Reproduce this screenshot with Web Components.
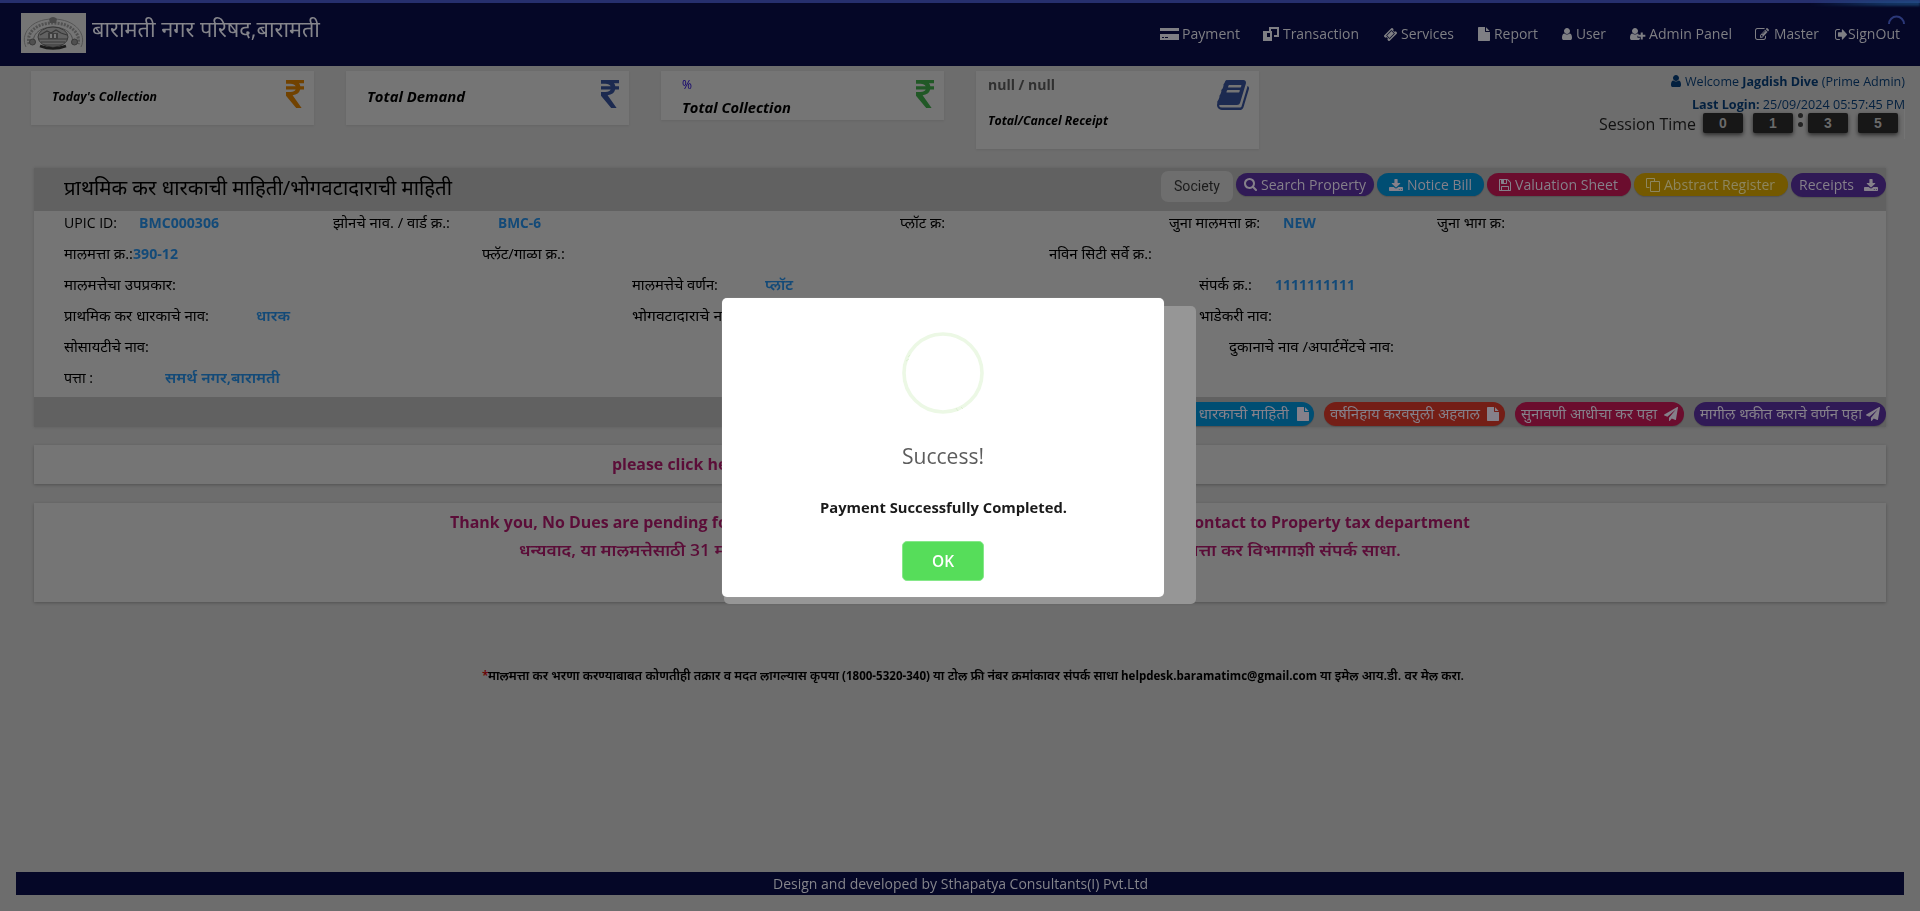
<!DOCTYPE html>
<html lang="mr">
<head>
<meta charset="utf-8">
<title>बारामती नगर परिषद</title>
<style>
html,body{margin:0;height:911px;overflow:hidden;background:#6d6d6d}
body{font-family:"Open Sans","Noto Sans","Noto Sans Devanagari",sans-serif;font-size:14px;color:#000;position:relative}
</style>
</head>
<body>
<tax-page></tax-page>
<script>
const ICONS = {
 user:['256 128 1280 1536','M1536 1399q0 109-62.5 187t-150.5 78h-854q-88 0-150.5-78t-62.5-187q0-85 8.5-160.5t31.5-152 58.5-131 94-89 134.5-34.5q131 128 313 128t313-128q76 0 134.5 34.5t94 89 58.5 131 31.5 152 8.5 160.5zm-256-887q0 159-112.5 271.5t-271.5 112.5-271.5-112.5-112.5-271.5 112.5-271.5 271.5-112.5 271.5 112.5 112.5 271.5z'],
 userplus:['256 128 2048 1536','M1536 1399q0 109-62.5 187t-150.5 78h-854q-88 0-150.5-78t-62.5-187q0-85 8.5-160.5t31.5-152 58.5-131 94-89 134.5-34.5q131 128 313 128t313-128q76 0 134.5 34.5v260h-128v250h330zm-256-887q0 159-112.5 271.5t-271.5 112.5-271.5-112.5-112.5-271.5 112.5-271.5 271.5-112.5 271.5 112.5 112.5 271.5zM1630 700h260v300h330v260h-330v330h-260v-330h-330v-260h330z'],
 search:['64 128 1664 1664','M1216 832q0-185-131.5-316.5t-316.5-131.5-316.5 131.5-131.5 316.5 131.5 316.5 316.5 131.5 316.5-131.5 131.5-316.5zm512 832q0 52-38 90t-90 38q-54 0-90-38l-343-342q-179 124-399 124-143 0-273.5-55.5t-225-150-150-225-55.5-273.5 55.5-273.5 150-225 225-150 273.5-55.5 273.5 55.5 225 150 150 225 55.5 273.5q0 220-124 399l343 343q37 37 37 90z'],
 download:['64 0 1664 1536','M1344 1344q0-26-19-45t-45-19-45 19-19 45 19 45 45 19 45-19 19-45zm256 0q0-26-19-45t-45-19-45 19-19 45 19 45 45 19 45-19 19-45zm128-224v320q0 40-28 68t-68 28h-1472q-40 0-68-28t-28-68v-320q0-40 28-68t68-28h465l135 136q58 56 136 56t136-56l136-136h464q40 0 68 28t28 68zm-325-569q17 41-14 70l-448 448q-18 19-45 19t-45-19l-448-448q-31-29-14-70 17-39 59-39h256v-448q0-26 19-45t45-19h256q26 0 45 19t19 45v448h256q42 0 59 39z'],
 floppy:['128 128 1536 1536','M512 1536h768v-384h-768v384zm896 0h128v-896q0-14-10-38.5t-20-34.5l-281-281q-10-10-34-20t-39-10v416q0 40-28 68t-68 28h-576q-40 0-68-28t-28-68v-416h-128v1280h128v-416q0-40 28-68t68-28h832q40 0 68 28t28 68v416zm-384-928v-320q0-13-9.5-22.5t-22.5-9.5h-192q-13 0-22.5 9.5t-9.5 22.5v320q0 13 9.5 22.5t22.5 9.5h192q13 0 22.5-9.5t9.5-22.5zm640 32v928q0 40-28 68t-68 28h-1344q-40 0-68-28t-28-68v-1344q0-40 28-68t68-28h928q40 0 88 20t76 48l280 280q28 28 48 76t20 88z'],
 plane:['0 0 1792 1792','M1764 11q33 24 27 64l-256 1536q-5 29-32 45-14 8-31 8-11 0-24-5l-453-185-242 295q-18 23-49 23-13 0-22-4-19-7-30.5-23.5t-11.5-36.5v-349l864-1059-1069 925-395-162q-37-14-40-55-2-40 32-59l1664-960q15-9 32-9 20 0 36 11z'],
 file:['128 0 1536 1792','M1152 512v-472q22 14 36 28l408 408q14 14 28 36h-472zm-128 32q0 40 28 68t68 28h544v1056q0 40-28 68t-68 28h-1344q-40 0-68-28t-28-68v-1600q0-40 28-68t68-28h800v544z'],
 edit:['0 128 1792 1408','M888 1184l116-116-152-152-116 116v56h96v96h56zm440-720q-16-16-33 1l-350 350q-17 17-1 33t33-1l350-350q17-17 1-33zm80 594v190q0 119-84.5 203.5t-203.5 84.5h-832q-119 0-203.5-84.5t-84.5-203.5v-832q0-119 84.5-203.5t203.5-84.5h832q63 0 117 25 15 7 18 23 3 17-9 29l-49 49q-14 14-32 8-23-6-45-6h-832q-66 0-113 47t-47 113v832q0 66 47 113t113 47h832q66 0 113-47t47-113v-126q0-13 9-22l64-64q15-15 35-7t20 29zm-96-738l288 288-672 672h-288v-288zm444 132l-92 92-288-288 92-92q28-28 68-28t68 28l152 152q28 28 28 68t-28 68z'],
 signout:['64 256 1568 1280','M704 1440q0 4 1 20t.5 26.5-3 23.5-10 19.5-20.5 6.5h-320q-119 0-203.5-84.5t-84.5-203.5v-704q0-119 84.5-203.5t203.5-84.5h320q13 0 22.5 9.5t9.5 22.5q0 4 1 20t.5 26.5-3 23.5-10 19.5-20.5 6.5h-320q-66 0-113 47t-47 113v704q0 66 47 113t113 47h312l11.5 1 11.5 3 8 5.5 7 9 2 13.5zm928-544q0 26-19 45l-544 544q-19 19-45 19t-45-19-19-45v-288h-448q-26 0-45-19t-19-45v-384q0-26 19-45t45-19h448v-288q0-26 19-45t45-19 45 19l544 544q19 19 19 45z'],
 ticket:['54 54 1684 1684','M1024 452l316 316-572 572-316-316zm-211 979l618-618q19-19 19-45t-19-45l-362-362q-18-18-45-18t-45 18l-618 618q-19 19-19 45t19 45l362 362q18 18 45 18t45-18zm889-637l-907 908q-37 37-90.5 37t-90.5-37l-126-125q56-56 56-136t-56-136-136-56-136 56l-125-126q-37-37-37-90.5t37-90.5l907-906q37-37 90.5-37t90.5 37l125 125q-56 56-56 136t56 136 136 56 136-56l126 125q37 37 37 90.5t-37 90.5z'],
 book:['64 128 1664 1536','M1703 478q40 57 18 129l-275 906q-19 64-76.5 107.5t-122.5 43.5h-923q-77 0-148.5-53.5t-99.5-131.5q-24-67-2-127 0-4 3-27t4-37q1-8-3-21.5t-3-19.5q2-11 8-21t16.5-23.5 16.5-23.5q23-38 45-91.5t30-91.5q3-10 .5-30t-.5-28q3-11 17-28t17-23q21-36 42-92t25-90q1-9-2.5-32t.5-28q4-13 22-30.5t22-22.5q19-26 42.5-84.5t27.5-96.5q1-8-3-25.5t-2-26.5q2-8 9-18t18-23 17-21q8-12 16.5-30.5t15-35 16-36 19.5-32 26.5-23.5 36-11.5 47.5 5.5l-1 3q38-9 51-9h761q74 0 114 56t18 130l-274 906q-36 119-71.5 153.5t-128.5 34.5h-869q-27 0-38 15-11 16-1 43 24 70 144 70h923q29 0 56-15.5t35-41.5l300-987q7-22 5-57 38 15 59 43zm-1064 2q-4 13 2 22.5t20 9.5h608q13 0 25.5-9.5t16.5-22.5l21-64q4-13-2-22.5t-20-9.5h-608q-13 0-25.5 9.5t-16.5 22.5zm-83 256q-4 13 2 22.5t20 9.5h608q13 0 25.5-9.5t16.5-22.5l21-64q4-13-2-22.5t-20-9.5h-608q-13 0-25.5 9.5t-16.5 22.5z'],
 card:['0 0 19 12','M0 0h19v3H0zM0 6h19v6H0zM2 9v1h2v-1zM5 9v1h3v-1z'],
 windows:['0 0 16 14','M6 0h10v10h-5v-2h3v-6h-6v2h-2zM0 4h9v10h-9zM4 6v4h3v-4z'],
 copy:['0 0 14 14',''],
 rupee:['0 0 18 28','M0 0h18v3.3h-5q1 1.2 1.3 3H18v3.3h-3.8q-1.4 5.2-7.6 5.6L15.600 28h-5.400L0 15.800V12h4.500q4.200 0 5.200-2.400H0V6.300h9.700Q8.500 3.700 4.500 3.700H0z']
};
const def = (n, html, cb) => customElements.define(n, class extends HTMLElement {
  connectedCallback(){
    if(this.shadowRoot) return;
    const a = k => this.getAttribute(k) || '';
    this.attachShadow({mode:'open'}).innerHTML = typeof html === 'function' ? html(a) : html;
    if(cb) cb(this, this.shadowRoot, a);
  }
});

/* icon: name, w, h */
def('ui-icon', a => {
  const i = ICONS[a('name')];
  const inner = a('name')==='copy'
    ? '<path fill="none" stroke="currentColor" d="M3.500 9.500h-3v-9h8v3M4.500 3.500h9v10h-9z"/>'
    : `<path fill="currentColor" fill-rule="${['card','windows'].includes(a('name'))?'evenodd':'nonzero'}" d="${i[1]}"/>`;
  return `<style>:host{display:block;flex:none;width:${a('w')}px;height:${a('h')}px}svg{display:block;width:100%;height:100%}</style>
  <svg viewBox="${i[0]}" preserveAspectRatio="none">${inner}</svg>`;
});

/* label that keeps to a given width */
def('fit-text', a => `<style>:host{display:inline-block;white-space:nowrap;width:${a('w')}px;text-align:left}span{display:inline-block;transform-origin:0 50%}</style><span>${a('t')}</span>`,
 (el, r, a) => { const s = r.querySelector('span'); const n = s.offsetWidth ? s.getBoundingClientRect().width : 0; if(n && a('w')) s.style.transform = `scaleX(${a('w')/n})`; });

def('nav-item', a => `<style>:host{display:flex;align-items:center;flex:none;width:${a('w')}px;color:#7f7f84;font-size:14px;line-height:20px}
 .i{width:${a('iw')}px;flex:none}</style><div class="i"><ui-icon name="${a('icon')}" w="${a('gw')}" h="${a('gh')}"></ui-icon></div><fit-text t="${a('t')}" w="${a('tw')}"></fit-text>`);

def('city-logo', `<style>:host{display:block;width:65px;height:40px;background:#757575;flex:none}svg{display:block}</style>
<svg width="65" height="40" viewBox="0 0 65 40" fill="none">
<path d="M5 34C-1 22 9 6 32 6s34 16 28 28" stroke="#555" stroke-width="1"/>
<path d="M8 31C5 20 15 10 32 10s28 10 25 21" stroke="#3f3f3f" stroke-width="3" stroke-dasharray="2 1.200" opacity=".65"/>
<path d="M13 31C10 21 20 14 32 14s22 7 19 17" stroke="#4b4b4b" stroke-width="1"/>
<ellipse cx="32" cy="24" rx="15" ry="10" fill="#626262" stroke="#383838" stroke-width="1"/>
<path d="M19 22l7-4 4 2 5-3 5 3 6 2M18 26h28M20 29h24M23 32h18" stroke="#383838" stroke-width="1.200"/>
<path d="M27 20h10v6H27z" fill="#3f3f3f"/><path d="M29 21h2v4h-2zM33 21h2v4h-2z" fill="#777"/>
<path d="M19 33q13 5 26 0" stroke="#1c1c1c" stroke-width="2.500"/>
<circle cx="11.500" cy="29" r="3" fill="#505050" stroke="#3a3a3a"/><circle cx="53.500" cy="29" r="3" fill="#505050" stroke="#3a3a3a"/>
<path d="M28 6q4-4 8 0l-1 4h-6z" fill="#484848"/></svg>`);

def('top-header', `<style>
:host{display:flex;height:66px;box-sizing:border-box;border-top:3px solid #262f6e;background:#050727;position:relative;padding-left:21px}
city-logo{margin-top:10px}
.t{margin:8px 0 0 6px;font-size:22px;line-height:34px;color:#85858b;width:1068px}
nav{display:flex;height:20px;margin-top:21px}
.glow{position:absolute;right:0;top:-3px;width:110px;height:6px;background:linear-gradient(90deg,transparent,#1d4f84 70%,#20578d);opacity:.6;filter:blur(1px)}
.spin{position:absolute;left:1888px;top:12px}
</style><city-logo></city-logo><div class="t"><fit-text t="बारामती नगर परिषद,बारामती" w="228"></fit-text></div>
<nav>
<nav-item w="103" iw="22" icon="card" gw="19" gh="12" t="Payment" tw="58"></nav-item>
<nav-item w="121" iw="20" icon="windows" gw="16" gh="14" t="Transaction" tw="76"></nav-item>
<nav-item w="94" iw="17" icon="ticket" gw="13" gh="13" t="Services" tw="53"></nav-item>
<nav-item w="84" iw="16" icon="file" gw="12" gh="14" t="Report" tw="44"></nav-item>
<nav-item w="68" iw="14" icon="user" gw="10" gh="12" t="User" tw="30"></nav-item>
<nav-item w="125" iw="19" icon="userplus" gw="16" gh="12" t="Admin Panel" tw="83"></nav-item>
<nav-item w="80" iw="19" icon="edit" gw="14" gh="12" t="Master" tw="45"></nav-item>
<nav-item w="66" iw="13" icon="signout" gw="12" gh="11" t="SignOut" tw="52"></nav-item>
</nav><i class="glow"></i><svg class="spin" width="17" height="9" viewBox="0 0 17 9"><path d="M1 9a7.500 7.500 0 0 1 15 0" fill="none" stroke="#2b3878" stroke-width="2"/></svg>`);

def('stat-card', a => `<style>
:host{display:flex;justify-content:space-between;width:283px;height:${a('h')}px;background:#757575;box-shadow:0 1px 2px rgba(0,0,0,.08);box-sizing:border-box;padding:9px ${a('pr')||10}px 0 0;flex:none}
.b{display:flex;flex-direction:column}ui-icon{color:${a('c')}}
</style><div class="b"><slot></slot></div><ui-icon name="${a('icon')}" w="${a('iw')||18}" h="${a('ih')||28}"></ui-icon>`);

def('session-clock', `<style>
:host{display:block;width:330px;color:#03203f;font-size:13px}
.r{display:flex;justify-content:flex-end;line-height:23px;height:23px}
.r ui-icon{margin:5px 4px 0 0}
.s{display:flex;height:20px;margin-top:-3px;padding-left:24px;color:#111;position:relative}
.s>fit-text{line-height:22px;font-size:16px;margin-right:7px;flex:none}
b{flex:none;width:40px;height:20px;background:#171717;border-radius:2px;box-shadow:0 2px 4px rgba(0,0,0,.6);color:#6a6a6a;font:bold 14px/20px "Liberation Sans",sans-serif;text-align:center;margin-right:10px}
b:last-of-type{margin:0}
.c{flex:none;width:15px;margin-left:-10px;display:flex;flex-direction:column;gap:4px;align-items:center}
.c u{width:5px;height:5px;border-radius:50%;background:#222}
.l{position:absolute;left:329px;top:-4px;width:1px;height:30px;background:#747474}
</style>
<div class="r"><ui-icon name="user" w="10" h="12"></ui-icon><fit-text t="Welcome &lt;strong&gt;Jagdish Dive&lt;/strong&gt; (Prime Admin)" w="220"></fit-text></div>
<div class="r"><fit-text t="&lt;strong&gt;Last Login:&lt;/strong&gt; 25/09/2024 05:57:45 PM" w="213"></fit-text></div>
<div class="s"><fit-text t="Session Time" w="97"></fit-text><b>0</b><b>1</b><div class="c"><u></u><u></u></div><b>3</b><b>5</b><i class="l"></i></div>`);

def('stats-strip', `<style>
:host{display:flex;height:102px;box-sizing:border-box;padding:5px 0 0 31px;align-items:flex-start}
stat-card{margin-right:32px}session-clock{margin-left:284px;margin-top:-1px}
fit-text{font-weight:700}.i{font-style:italic}
.a{margin:8px 0 0 21px;font-size:12px;line-height:18px}
.b{font-size:14px}
</style>
<stat-card h="54" icon="rupee" c="#714200"><fit-text class="i a" t="Today's Collection" w="105"></fit-text></stat-card>
<stat-card h="54" icon="rupee" c="#1c2a50"><fit-text class="i a b" t="Total Demand" w="98"></fit-text></stat-card>
<stat-card h="49" icon="rupee" c="#215826"><fit-text style="font-weight:400;color:#11006e;font-size:12px;line-height:14px;margin:-2px 0 0 21px" t="%" w="10"></fit-text><fit-text class="i" style="font-size:14px;line-height:20px;margin:6px 0 0 21px" t="Total Collection" w="109"></fit-text></stat-card>
<stat-card h="78" icon="book" iw="32" ih="30" c="#1c2a50"><fit-text style="color:#303030;font-size:14px;line-height:20px;margin:-5px 0 0 12px" t="null / null" w="67"></fit-text><fit-text class="i" style="font-size:12px;line-height:18px;margin:17px 0 0 12px" t="Total/Cancel Receipt" w="120"></fit-text></stat-card>
<session-clock></session-clock>`);

def('pill-button', a => `<style>
:host{display:flex;align-items:center;flex:none;box-sizing:border-box;width:${a('w')}px;height:${a('h')||24}px;border-radius:12px;background:${a('bg')};color:${a('c')||'#85808a'};font-size:14px;line-height:20px;padding:0 ${a('pr')||9}px 0 ${a('pl')||9}px;box-shadow:0 1px 1px rgba(0,0,0,.15);justify-content:space-between}
:host([reverse]){flex-direction:row-reverse}:host([reverse]) fit-text{margin-top:-1px}
</style><ui-icon name="${a('icon')}" w="${a('iw')}" h="${a('ih')}"></ui-icon><fit-text t="${a('t')}" w="${a('tw')}"></fit-text>`);

def('info-row', a => `<style>
:host{display:grid;height:31px;grid-template-columns:${a('cols')};align-items:start;font-size:14px;line-height:23px;padding-left:30px}
::slotted(b){color:#134a78;font-weight:700}::slotted(b[lang]){font-weight:600}</style><slot></slot>`);

def('property-panel', `<style>
:host{display:block;width:1852px;height:259px;margin-left:34px;background:#757575;box-shadow:0 0 3px rgba(0,0,0,.15)}
header{display:flex;height:43px;background:#616161;box-sizing:border-box;padding-left:30px}
h1{margin:0;width:1097px;font-weight:400;font-size:20px;line-height:39px;flex:none}
.soc{width:72px;height:31px;margin:3px 3px 0 0;border-radius:7px;background:#6e6e6e;font:15px/31px Roboto,sans-serif;text-align:center;color:#1c1c1c}
.g{display:flex;gap:3px;margin-top:5px}
.body{height:186px}
footer{display:flex;justify-content:flex-end;gap:10px;height:30px;box-sizing:border-box;padding-top:5px;background:#616161}
</style>
<header><h1><fit-text t="प्राथमिक कर धारकाची माहिती/भोगवटादाराची माहिती" w="388"></fit-text></h1>
<div class="soc"><fit-text t="Society" w="46"></fit-text></div>
<div class="g">
<pill-button w="138" h="23" bg="#301a56" icon="search" iw="13" ih="13" t="Search Property" tw="105" pl="8" pr="8"></pill-button>
<pill-button w="107" h="23" bg="#004e73" icon="download" iw="14" ih="12" t="Notice Bill" tw="65" pl="12" pr="12"></pill-button>
<pill-button w="144" h="23" bg="#6b0d2e" icon="floppy" iw="12" ih="12" t="Valuation Sheet" tw="103" pl="12" pr="13"></pill-button>
<pill-button w="154" h="23" bg="#745900" c="#8d865f" icon="copy" iw="14" ih="14" t="Abstract Register" tw="111" pl="12" pr="13"></pill-button>
<pill-button reverse w="95" bg="#301a56" icon="download" iw="14" ih="12" t="Receipts" tw="55" pl="8" pr="8"></pill-button>
</div></header>
<div class="body">
<info-row cols="75px 194px 165px 402px 269px 114px 154px 100px"><fit-text t="UPIC ID:" w="53"></fit-text><b><fit-text t="BMC000306" w="80"></fit-text></b><fit-text t="झोनचे नाव. / वार्ड क्र.:" w="117"></fit-text><b><fit-text t="BMC-6" w="43"></fit-text></b><fit-text t="प्लॉट क्र:" w="45"></fit-text><fit-text t="जुना मालमत्ता क्र:" w="91"></fit-text><b><fit-text t="NEW" w="33"></fit-text></b><fit-text t="जुना भाग क्र:" w="68"></fit-text></info-row>
<info-row cols="69px 349px 567px 200px"><fit-text t="मालमत्ता क्र.:" w="69"></fit-text><b><fit-text t="390-12" w="45"></fit-text></b><fit-text t="फ्लॅट/गाळा क्र.:" w="83"></fit-text><fit-text t="नविन सिटी सर्वे क्र.:" w="103"></fit-text></info-row>
<info-row cols="568px 133px 434px 76px 100px"><fit-text t="मालमत्तेचा उपप्रकार:" w="112"></fit-text><fit-text t="मालमत्तेचे वर्णन:" w="86"></fit-text><b lang="mr"><fit-text t="प्लॉट" w="28"></fit-text></b><fit-text t="संपर्क क्र.:" w="53"></fit-text><b><fit-text t="1111111111" w="80"></fit-text></b></info-row>
<info-row cols="192px 376px 567px 100px"><fit-text t="प्राथमिक कर धारकाचे नाव:" w="145"></fit-text><b lang="mr"><fit-text t="धारक" w="34"></fit-text></b><fit-text t="भोगवटादाराचे नाव:" w="107"></fit-text><fit-text t="भाडेकरी नाव:" w="73"></fit-text></info-row>
<info-row cols="1165px 200px"><fit-text t="सोसायटीचे नाव:" w="85"></fit-text><fit-text t="दुकानाचे नाव /अपार्टमेंटचे नाव:" w="165"></fit-text></info-row>
<info-row cols="101px 200px"><fit-text t="पत्ता :" w="29"></fit-text><b lang="mr"><fit-text t="समर्थ नगर,बारामती" w="115"></fit-text></b></info-row>
</div>
<footer>
<pill-button reverse w="193" bg="#004e73" icon="file" iw="12" ih="14" t="प्राथमिक कर धारकाची माहिती" tw="163" pl="5" pr="5"></pill-button>
<pill-button reverse w="181" bg="#741e16" icon="file" iw="12" ih="14" t="वर्षनिहाय करवसुली अहवाल" tw="150" pl="6" pr="6"></pill-button>
<pill-button reverse w="169" bg="#6b0d2e" icon="plane" iw="14" ih="14" t="सुनावणी आधीचा कर पहा" tw="136" pl="6" pr="6"></pill-button>
<pill-button reverse w="192" bg="#301a56" icon="plane" iw="14" ih="14" t="मागील थकीत कराचे वर्णन पहा" tw="162" pl="6" pr="6"></pill-button>
</footer>`);

def('notice-box', a => `<style>
:host{display:block;width:1852px;height:${a('h')}px;margin:${a('mt')}px 0 0 34px;background:#757575;box-shadow:0 1px 3px rgba(0,0,0,.25);box-sizing:border-box;padding-top:${a('pt')}px;color:#5b0d38;font-size:16px;font-weight:700;line-height:28px}
</style><slot></slot>`);

def('alert-modal', `<style>
:host{display:block}
.ghost{position:absolute;left:724px;top:306px;width:472px;height:298px;border-radius:5px;background:#969696}
.box{position:absolute;left:722px;top:298px;width:442px;height:299px;border-radius:5px;background:#fff;display:flex;flex-direction:column;align-items:center;box-shadow:0 0 1px #aaa}
svg{margin-top:34px;display:block;flex:none}
.t{font-size:21px;line-height:28px;color:#5c5c5c;margin-top:28px;font-weight:500}
.m{font-size:14.500px;line-height:22px;font-weight:700;color:#1a1a1a;margin-top:27px}
button{margin-top:22px;width:82px;height:40px;border:1px solid #86e88a;border-radius:5px;background:#56dd5a;color:#fff;font:600 16px "Open Sans",sans-serif;padding:0}
</style><div class="ghost"></div><div class="box">
<svg width="82" height="82" viewBox="0 0 82 82"><circle cx="41" cy="41" r="39" fill="none" stroke="#ecf8e5" stroke-width="3.600"/><path d="M4 29l3-2M6 25l2-2M54 76l2 3M59 75l2 2" stroke="#d5edc8" stroke-width=".7"/></svg>
<div class="t"><fit-text t="Success!" w="82"></fit-text></div><div class="m"><fit-text t="Payment Successfully Completed." w="247"></fit-text></div><button><fit-text t="OK" w="22"></fit-text></button></div>`);

def('tax-page', `<style>
:host{display:block;height:911px;position:relative;overflow:hidden}
.ln{display:flex;justify-content:space-between;height:28px}
.mr{font-weight:600}
.help{display:flex;margin:63px 0 0 482px;height:22px;font-size:12px;font-weight:600;line-height:22px}
.help i{color:#6b0000;font-style:normal;width:6px}
.help fit-text{margin-right:3px}
.help .en{font-weight:700}
.foot{margin:185px 16px 0;height:23px;background:#050727;color:#85858b;text-align:center;line-height:23px;font-size:14px}
</style>
<top-header></top-header><stats-strip></stats-strip><property-panel></property-panel>
<notice-box h="39" mt="18" pt="5"><div style="padding-left:578px"><fit-text t="please click here" w="132"></fit-text></div></notice-box>
<notice-box h="99" mt="19" pt="5">
<div class="ln" style="padding:0 416px"><fit-text t="Thank you, No Dues are pending for" w="285"></fit-text><fit-text t="contact to Property tax department" w="284"></fit-text></div>
<div class="ln mr" style="padding:0 485px"><fit-text t="धन्यवाद, या मालमत्तेसाठी 31 मार्च" w="223"></fit-text><fit-text t="मालमत्ता कर विभागाशी संपर्क साधा." w="243"></fit-text></div></notice-box>
<div class="help"><i>*</i><fit-text t="मालमत्ता कर भरणा करण्याबाबत कोणतीही तक्रार व मदत लागल्यास कृपया" w="351"></fit-text><fit-text class="en" t="(1800-5320-340)" w="88"></fit-text><fit-text t="या टोल फ्री नंबर क्रमांकावर संपर्क साधा" w="185"></fit-text><fit-text class="en" t="helpdesk.baramatimc@gmail.com" w="196"></fit-text><fit-text t="या इमेल आय.डी. वर मेल करा." w="144"></fit-text></div>
<div class="foot"><fit-text t="Design and developed by Sthapatya Consultants(I) Pvt.Ltd" w="375"></fit-text></div>
<alert-modal></alert-modal>`);
</script>
</body>
</html>
